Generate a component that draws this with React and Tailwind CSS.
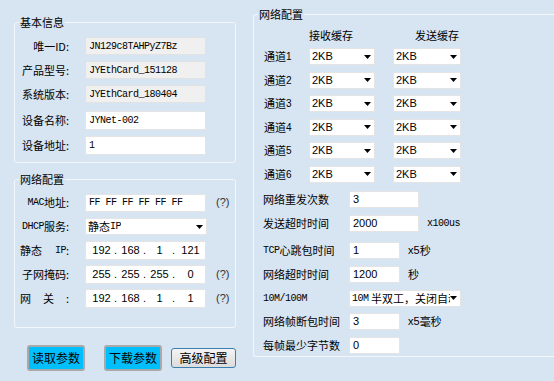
const cjk = "font-['Noto_Sans_CJK_SC',sans-serif]";
const mono = "font-['Liberation_Mono',monospace] text-[10px] tracking-[-0.5px]";
const sans = "font-['Liberation_Sans','Noto_Sans_CJK_SC',sans-serif] text-[11px]";

const Arrow = () => (
  <svg width="7" height="4" viewBox="0 0 7 4" className="shrink-0">
    <path d="M0 0h7L3.5 4z" fill="#000" />
  </svg>
);

const Select = ({ value, className = "", textClass = sans }) => (
  <div
    className={`flex items-center justify-between overflow-hidden bg-white border border-[#e4e4e4] pl-[2px] pr-[3px] ${className}`}
  >
    <span className={`flex items-center whitespace-nowrap overflow-hidden ${textClass}`}>{value}</span>
    <Arrow />
  </div>
);

const Box = ({ children, className = "", readOnly }) => (
  <div
    className={`flex items-center border pl-[3px] ${
      readOnly ? "bg-[#f0f0f0] border-[#e2e2e2]" : "bg-white border-[#e4e4e4]"
    } ${className}`}
  >
    {children}
  </div>
);

const IpBox = ({ parts }) => (
  <Box className="w-[121px] h-[19px] pl-0">
    {parts.map((p, i) => (
      <div key={i} className="flex flex-1 items-center">
        <span className={`flex-1 text-center ${sans}`}>{p}</span>
        {i < 3 && <span className={`w-[4px] ${sans}`}>.</span>}
      </div>
    ))}
  </Box>
);

const Help = () => <span className={`ml-[10px] ${sans} text-[#333]`}>(?)</span>;

const GroupBox = ({ title, className = "", children }) => (
  <fieldset className={`border border-[#f3f7fb] rounded-[3px] ${className}`}>
    <legend className={`ml-[4px] px-[1px] h-[16px] leading-[16px] text-[11px] ${cjk}`}>{title}</legend>
    {children}
  </fieldset>
);

const Label = ({ children }) => (
  <div className={`w-[54px] flex items-center justify-end text-[11px] whitespace-nowrap ${cjk}`}>{children}</div>
);

const basicInfo = [
  { label: "唯一ID:", value: "JN129c8TAHPyZ7Bz", readOnly: true },
  { label: "产品型号:", value: "JYEthCard_151128", readOnly: true },
  { label: "系统版本:", value: "JYEthCard_180404", readOnly: true },
  { label: "设备名称:", value: "JYNet-002" },
  { label: "设备地址:", value: "1" },
];

const channels = [1, 2, 3, 4, 5, 6];

export default function App() {
  return (
    <div className={`flex w-[554px] h-[381px] overflow-hidden bg-[#d7e4f2] text-black ${cjk}`}>
      {/* left column */}
      <div className="flex flex-col w-[222px] ml-[14px] pt-[14px] shrink-0">
        <GroupBox title="基本信息" className="h-[149px]">
          <div className="flex flex-col pt-[7px]">
            {basicInfo.map((row, idx) => (
              <div
                key={idx}
                className={`flex items-center ${idx < 3 ? "h-[18px]" : "h-[19px]"} ${
                  idx === 0 ? "" : idx === 3 ? "mt-[8px]" : "mt-[6px]"
                }`}
              >
                <Label>{row.label}</Label>
                <Box readOnly={row.readOnly} className="ml-[16px] w-[121px] h-full">
                  <span className={mono}>{row.value}</span>
                </Box>
              </div>
            ))}
          </div>
        </GroupBox>

        <GroupBox title="网络配置" className="mt-[8px] h-[157px]">
          <div className="flex flex-col gap-[5px] pt-[6px]">
            <div className="flex items-center h-[19px]">
              <Label>
                <span className={mono}>MAC</span>
                <span>地址:</span>
              </Label>
              <Box className="ml-[16px] w-[121px] h-[18px]">
                <span className={mono}>FF FF FF FF FF FF</span>
              </Box>
              <Help />
            </div>
            <div className="flex items-center h-[19px]">
              <Label>
                <span className={mono}>DHCP</span>
                <span>服务:</span>
              </Label>
              <Select
                value={
                  <>
                    <span>静态</span>
                    <span className={mono}>IP</span>
                  </>
                }
                textClass="text-[11px]"
                className="ml-[16px] w-[122px] h-[17px]"
              />
            </div>
            <div className="flex items-center h-[19px]">
              <Label>
                <span className="w-[49px] flex items-center justify-between">
                  <span>静态</span>
                  <span className="flex items-center">
                    <span className={mono}>IP</span>
                    <span>:</span>
                  </span>
                </span>
              </Label>
              <div className="ml-[16px]">
                <IpBox parts={["192", "168", "1", "121"]} />
              </div>
            </div>
            <div className="flex items-center h-[19px]">
              <Label>子网掩码:</Label>
              <div className="ml-[16px]">
                <IpBox parts={["255", "255", "255", "0"]} />
              </div>
              <Help />
            </div>
            <div className="flex items-center h-[19px]">
              <Label>
                <span className="w-[49px] flex justify-between">
                  <span>网</span>
                  <span>关</span>
                  <span>:</span>
                </span>
              </Label>
              <div className="ml-[16px]">
                <IpBox parts={["192", "168", "1", "1"]} />
              </div>
              <Help />
            </div>
          </div>
        </GroupBox>

        <div className="flex items-center mt-[17px] pl-[13px]">
          <button className="w-[58px] h-[26px] bg-[#00bfff] border-2 border-[#a9a9a9] rounded-[3px] text-[12px] leading-none">
            读取参数
          </button>
          <button className="ml-[19px] w-[58px] h-[26px] bg-[#00bfff] border-2 border-[#a9a9a9] rounded-[3px] text-[12px] leading-none">
            下载参数
          </button>
          <button className="ml-[9px] w-[65px] h-[20px] bg-gradient-to-b from-[#f4f4f4] to-[#dcdcdc] border border-[#3c7fb1] rounded-[3px] text-[12px] leading-none">
            高级配置
          </button>
        </div>
      </div>

      {/* right column */}
      <GroupBox title="网络配置" className="ml-[17px] mt-[6px] w-[320px] h-[351px] shrink-0 border-r-0">
        <div className="flex flex-col pl-[10px] text-[11px]">
          <div className="flex items-center h-[14px] mt-[6px]">
            <span className="ml-[45px] w-[106px]">接收缓存</span>
            <span>发送缓存</span>
          </div>
          <div className="flex flex-col gap-[6.5px] mt-[6px]">
            {channels.map((ch) => (
              <div key={ch} className="flex items-center h-[17px]">
                <span className="w-[45px] flex items-center">
                  <span>通道</span>
                  <span className="font-['Liberation_Sans',sans-serif] text-[10px]">{ch}</span>
                </span>
                <Select value="2KB" className="w-[66px] h-[17px]" textClass={`${sans} text-[10px]`} />
                <Select value="2KB" className="ml-[18px] w-[68px] h-[17px]" textClass={`${sans} text-[10px]`} />
              </div>
            ))}
          </div>

          <div className="flex flex-col mt-[8px]">
            <div className="flex items-center h-[17px]">
              <span className="w-[86px] -ml-[1px]">网络重发次数</span>
              <Box className="w-[70px] h-[17px]">
                <span className={sans}>3</span>
              </Box>
            </div>
            <div className="flex items-center h-[17px] mt-[7px]">
              <span className="w-[86px] -ml-[1px]">发送超时时间</span>
              <Box className="w-[70px] h-[17px]">
                <span className={sans}>2000</span>
              </Box>
              <span className={`ml-[8px] ${mono}`}>x100us</span>
            </div>
            <div className="flex items-center h-[17px] mt-[10px]">
              <span className="w-[86px] -ml-[1px] flex items-center">
                <span className={mono}>TCP</span>
                <span>心跳包时间</span>
              </span>
              <Box className="w-[51px] h-[17px]">
                <span className={sans}>1</span>
              </Box>
              <span className="ml-[8px] flex items-center">
                <span className={sans}>x5</span>
                <span>秒</span>
              </span>
            </div>
            <div className="flex items-center h-[17px] mt-[7px]">
              <span className="w-[86px] -ml-[1px]">网络超时时间</span>
              <Box className="w-[51px] h-[17px]">
                <span className={sans}>1200</span>
              </Box>
              <span className="ml-[8px]">秒</span>
            </div>
            <div className="flex items-center h-[17px] mt-[7px]">
              <span className={`w-[86px] -ml-[1px] ${mono}`}>10M/100M</span>
              <Select
                value={
                  <>
                    <span className={mono}>10M</span>
                    <span>&nbsp;半双工，关闭自动协商</span>
                  </>
                }
                textClass="text-[11px] w-[98px]"
                className="w-[112px] h-[17px]"
              />
            </div>
            <div className="flex items-center h-[17px] mt-[6px]">
              <span className="w-[86px] -ml-[1px]">网络帧断包时间</span>
              <Box className="w-[51px] h-[17px]">
                <span className={sans}>3</span>
              </Box>
              <span className="ml-[8px] flex items-center">
                <span className={sans}>x5</span>
                <span>毫秒</span>
              </span>
            </div>
            <div className="flex items-center h-[17px] mt-[7px]">
              <span className="w-[86px] -ml-[1px]">每帧最少字节数</span>
              <Box className="w-[51px] h-[17px]">
                <span className={sans}>0</span>
              </Box>
            </div>
          </div>
        </div>
      </GroupBox>
    </div>
  );
}
